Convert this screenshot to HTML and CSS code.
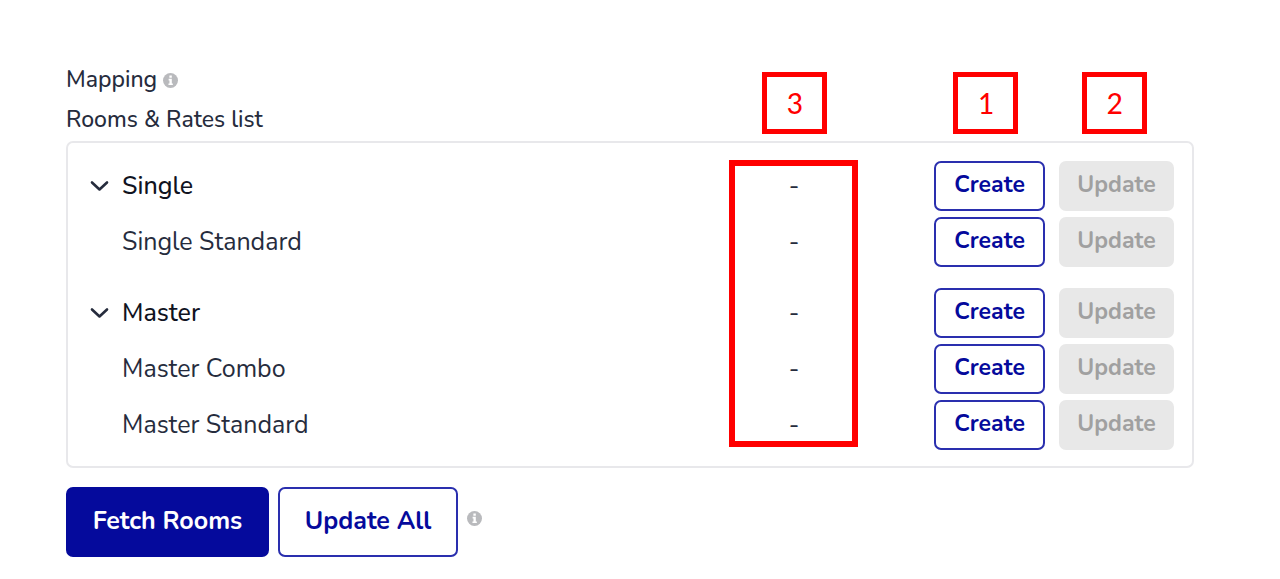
FILE: index.html
```html
<!DOCTYPE html>
<html lang="en">
<head>
    <meta charset="UTF-8">
    <meta name="viewport" content="width=device-width, initial-scale=1.0">
    <title>Mapping</title>
    <link rel="stylesheet" href="styles.css">
</head>
<body>
    <main class="mapping">
        <h1 class="title">
            Mapping
            <svg class="info" viewBox="0 0 16 16" aria-hidden="true">
                <circle cx="8" cy="8" r="8"/>
                <path d="M6.8 2.7h2.6v2.3H6.8zM6 6.2h3.4v4.9h1.1v1.7H5.8v-1.7h1.1V7.9H6z"/>
            </svg>
        </h1>
        <h2 class="subtitle">Rooms &amp; Rates list</h2>

        <div class="panel">
            <ul class="group">
                <li class="row room">
                    <button type="button" class="toggle" aria-label="Toggle Single">
                        <svg viewBox="0 0 18 12" aria-hidden="true"><path d="M2 2.5 9.5 9.5 17 2.5"/></svg>
                    </button>
                    <span class="name">Single</span>
                    <span class="mapped">-</span>
                    <button type="button" class="btn">Create</button>
                    <button type="button" class="btn" disabled>Update</button>
                </li>
                <li class="row">
                    <span class="name">Single Standard</span>
                    <span class="mapped">-</span>
                    <button type="button" class="btn">Create</button>
                    <button type="button" class="btn" disabled>Update</button>
                </li>
            </ul>
            <ul class="group">
                <li class="row room">
                    <button type="button" class="toggle" aria-label="Toggle Master">
                        <svg viewBox="0 0 18 12" aria-hidden="true"><path d="M2 2.5 9.5 9.5 17 2.5"/></svg>
                    </button>
                    <span class="name">Master</span>
                    <span class="mapped">-</span>
                    <button type="button" class="btn">Create</button>
                    <button type="button" class="btn" disabled>Update</button>
                </li>
                <li class="row">
                    <span class="name">Master Combo</span>
                    <span class="mapped">-</span>
                    <button type="button" class="btn">Create</button>
                    <button type="button" class="btn" disabled>Update</button>
                </li>
                <li class="row">
                    <span class="name">Master Standard</span>
                    <span class="mapped">-</span>
                    <button type="button" class="btn">Create</button>
                    <button type="button" class="btn" disabled>Update</button>
                </li>
            </ul>

            <!-- callouts over the columns -->
            <span class="callout callout-mapped">3</span>
            <span class="callout callout-create">1</span>
            <span class="callout callout-update">2</span>
            <span class="outline"></span>
        </div>

        <div class="actions">
            <button type="button" class="btn btn-large btn-primary">Fetch Rooms</button>
            <button type="button" class="btn btn-large">Update All</button>
            <svg class="info" viewBox="0 0 16 16" aria-hidden="true">
                <circle cx="8" cy="8" r="8"/>
                <path d="M6.8 2.7h2.6v2.3H6.8zM6 6.2h3.4v4.9h1.1v1.7H5.8v-1.7h1.1V7.9H6z"/>
            </svg>
        </div>
    </main>
</body>
</html>
```

FILE: styles.css
```css
* {
    box-sizing: border-box;
}
body {
    margin: 0;
    background-color: #fff;
    color: #262c3d;
    font-family: Nunito, "Noto Sans", sans-serif;
    font-size: 25px;
}
.mapping {
    padding: 60px 86px 20px 66px;
}
.title, .subtitle {
    display: flex;
    align-items: center;
    gap: 6px;
    margin: 0;
    font-size: 23px;
    font-weight: 500;
    line-height: 40px;
}
.info {
    width: 15px;
    height: 15px;
    fill: #b9babd;
}
.info path {
    fill: #fff;
}
.panel {
    position: relative;
    display: flex;
    flex-direction: column;
    gap: 21px;
    margin-top: 1px;
    padding: 18px 18px 16px 22px;
    border: 2px solid #e8e8eb;
    border-radius: 7px;
}
.group {
    display: flex;
    flex-direction: column;
    gap: 6px;
    margin: 0;
    padding: 0;
    list-style: none;
}
.row {
    display: grid;
    grid-template-columns: 18px 1fr 128px 48px 111px 115px;
    column-gap: 14px;
    align-items: center;
    height: 50px;
}
.name {
    grid-column: 2;
}
.room .name {
    color: #10131f;
    font-weight: 500;
}
.mapped {
    grid-column: 3;
    text-align: center;
}
.row .btn {
    grid-column: 5;
}
.row .btn:disabled {
    grid-column: 6;
}
.toggle {
    display: flex;
    padding: 0;
    border: 0;
    background: none;
    cursor: pointer;
}
.toggle svg {
    width: 18px;
    height: 12px;
    overflow: visible;
    fill: none;
    stroke: #262c3d;
    stroke-width: 2.6;
    stroke-linecap: round;
    stroke-linejoin: round;
}
.btn {
    height: 50px;
    padding: 0 0 3px;
    border: 2px solid #2a2fae;
    border-radius: 7px;
    background-color: #fff;
    color: #050a9c;
    font-family: inherit;
    font-size: 23px;
    font-weight: 700;
    cursor: pointer;
}
.btn:disabled {
    border-color: #e8e8e8;
    background-color: #e8e8e8;
    color: #a0a0a0;
    cursor: default;
}
.actions {
    display: flex;
    align-items: center;
    gap: 9px;
    margin-top: 19px;
}
.btn-large {
    width: 180px;
    height: 70px;
    font-size: 25px;
}
.btn-primary {
    width: 203px;
    border-color: #050a9c;
    background-color: #050a9c;
    color: #fff;
}
.actions .info {
    margin-bottom: 8px;
}
.callout {
    position: absolute;
    top: -71px;
    width: 65px;
    height: 62px;
    border: 5px solid #f00;
    color: #f00;
    font-family: Calibri, Carlito, Lato, sans-serif;
    font-size: 32px;
    line-height: 54px;
    text-align: center;
}
.callout-mapped {
    right: 365px;
}
.callout-create {
    right: 174px;
}
.callout-update {
    right: 45px;
}
.outline {
    position: absolute;
    top: 17px;
    right: 334px;
    bottom: 19px;
    width: 129px;
    border: 6px solid #f00;
    pointer-events: none;
}
```
